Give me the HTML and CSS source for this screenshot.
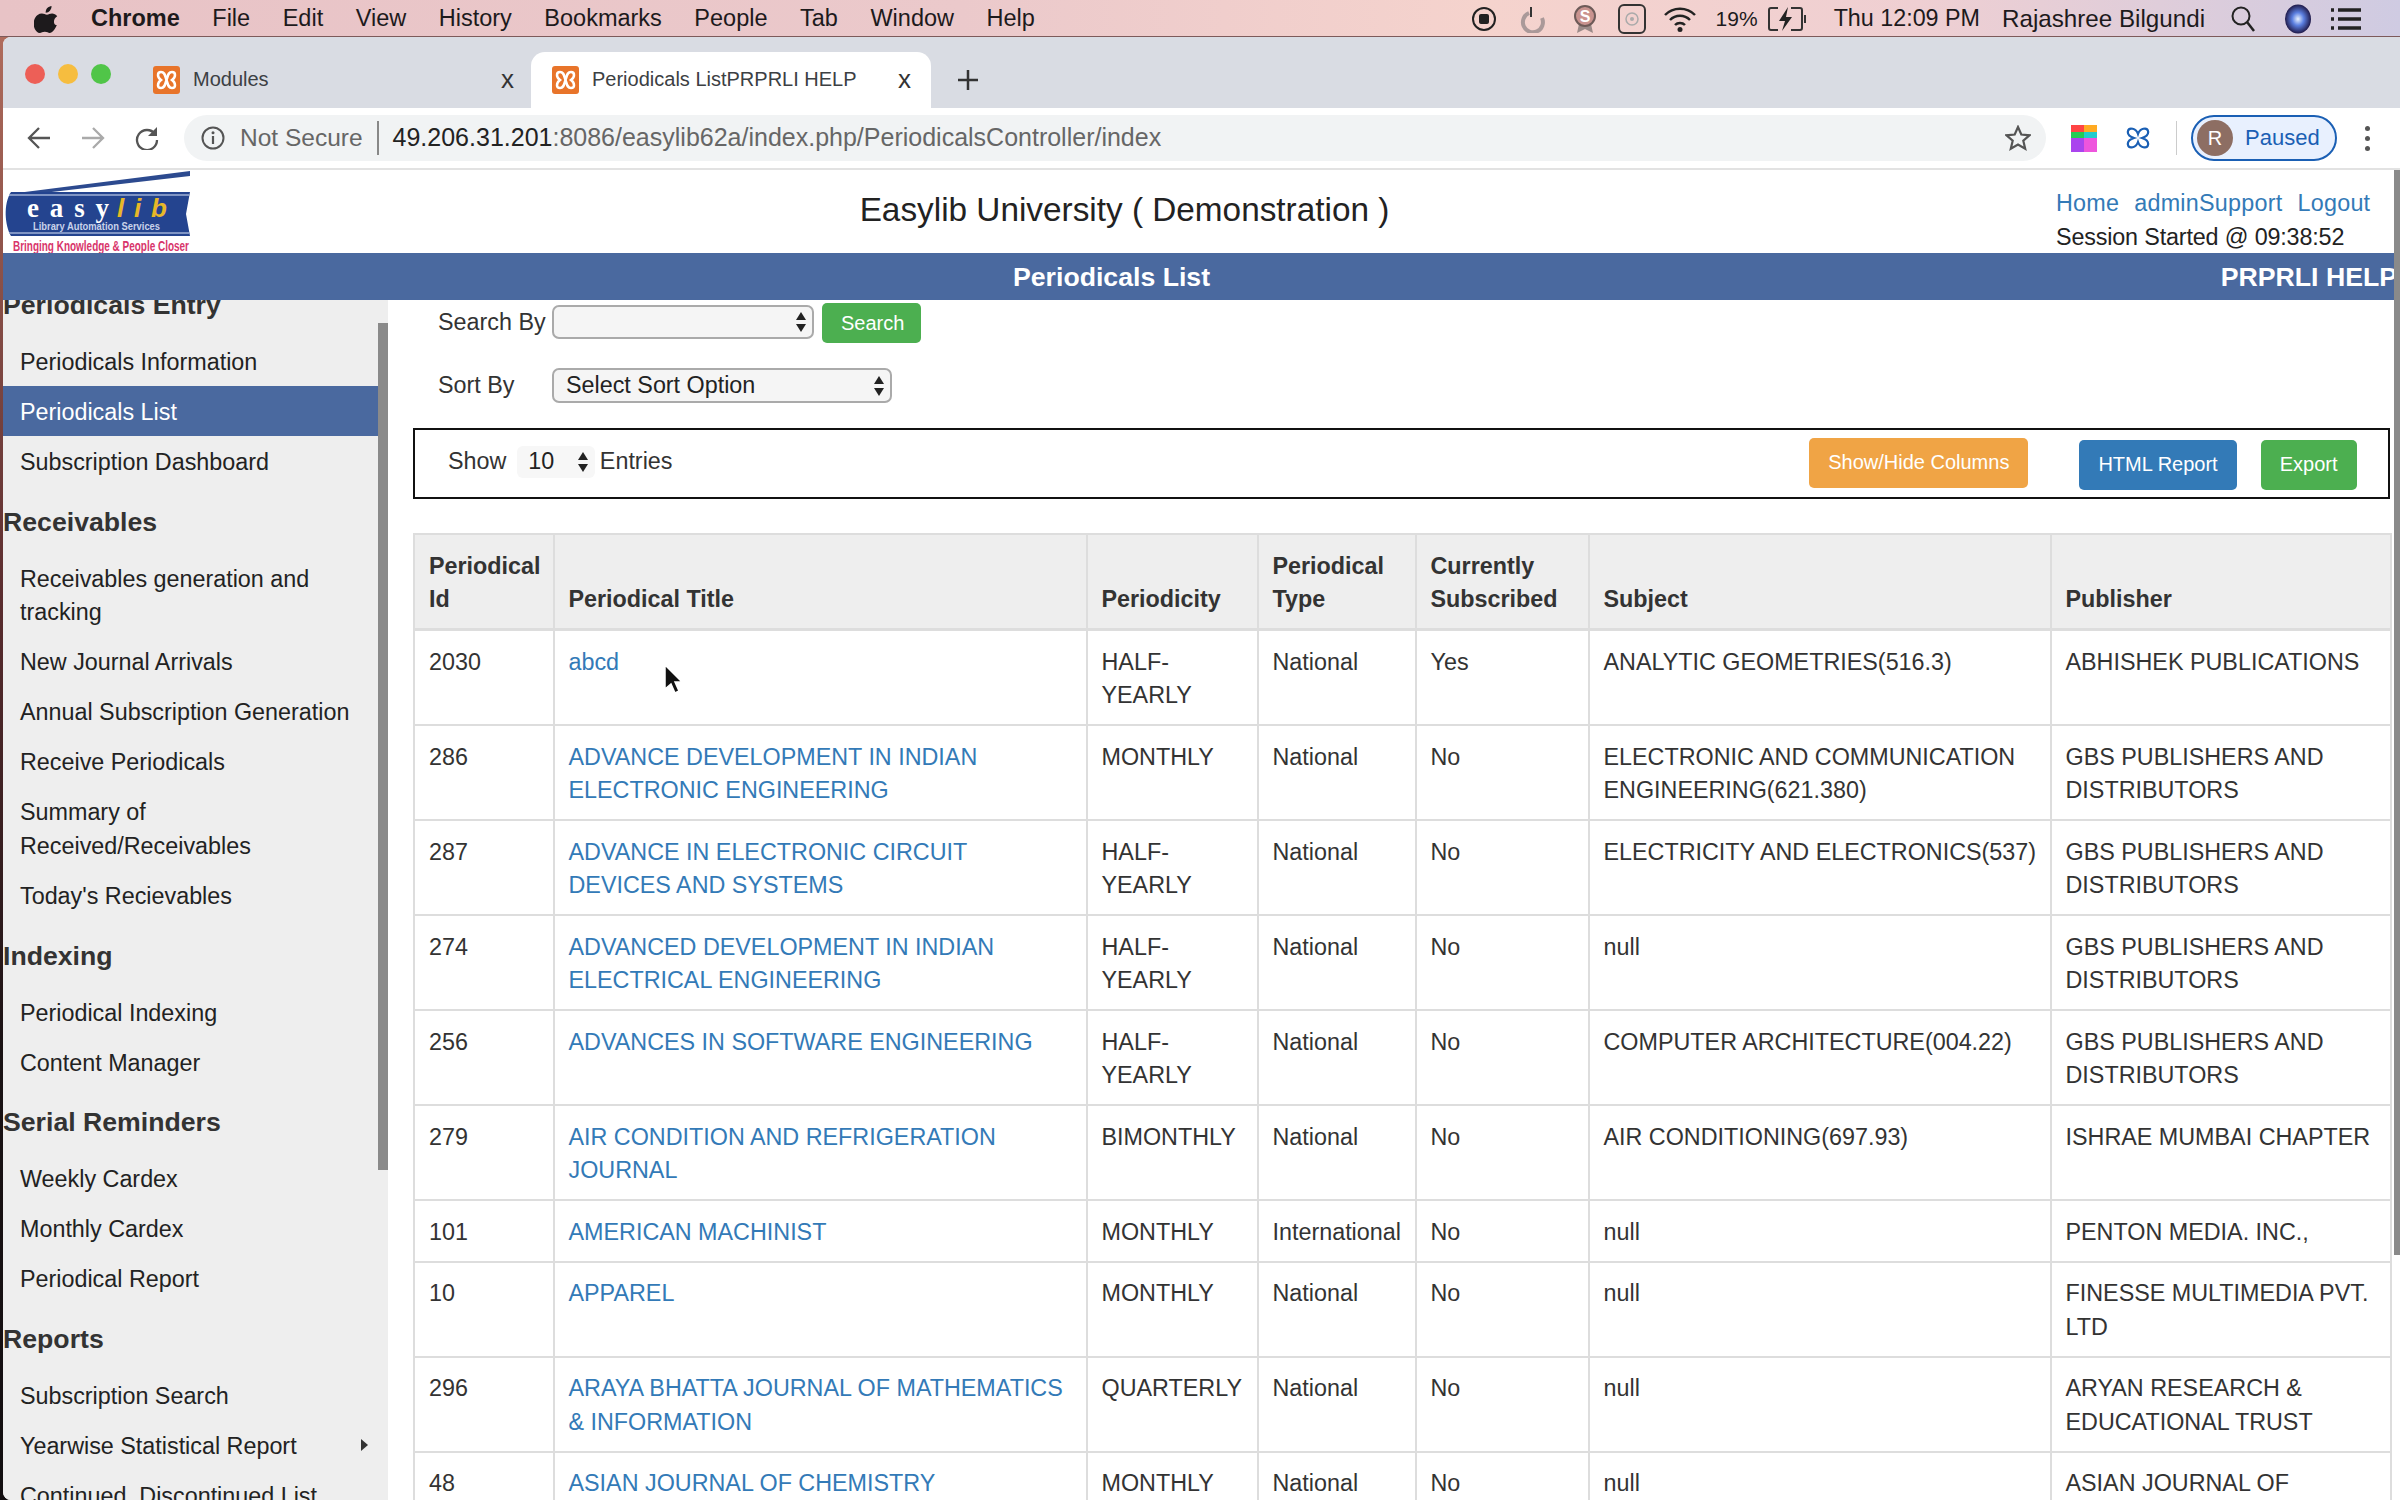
FILE: index.html
```html
<!DOCTYPE html>
<html lang="en">
<head>
    <meta charset="UTF-8">
    <meta name="viewport" content="width=device-width, initial-scale=1.0">
    <title>Periodicals List</title>
    <link rel="stylesheet" href="styles.css">
</head>
<body>

    <!-- mac menu bar -->
    <div class="menubar">
        <svg class="apple" width="24" height="28" viewBox="0 0 24 28"><path d="M17.5 1c.2 2-.6 3.600-1.600 4.800-1.100 1.200-2.700 2.100-4.200 2-.2-1.800.7-3.600 1.600-4.700C14.400 1.900 16.200 1.100 17.500 1zM22.800 20c-.7 1.600-1 2.300-1.900 3.700-1.300 1.900-3 4.200-5.100 4.200-1.900 0-2.400-1.200-5-1.200s-3.200 1.200-5 1.200c-2.200 0-3.800-2.100-5-4C-1.500 19.500-.2 12.600 3.600 10c1.400-.9 2.900-1.400 4.300-1.400 2.100 0 3.400 1.200 5.100 1.200 1.700 0 2.700-1.200 5.100-1.200 1.800 0 3.800 1 5.100 2.700-4.500 2.500-3.800 8.900-1 8.700z" fill="#1d1a1c"/></svg>
        <span class="menu-app">Chrome</span>
        <span class="menu-item">File</span>
        <span class="menu-item">Edit</span>
        <span class="menu-item">View</span>
        <span class="menu-item">History</span>
        <span class="menu-item">Bookmarks</span>
        <span class="menu-item">People</span>
        <span class="menu-item">Tab</span>
        <span class="menu-item">Window</span>
        <span class="menu-item">Help</span>

        <div class="menu-status">
            <svg width="26" height="26" viewBox="0 0 26 26"><circle cx="13" cy="13" r="11" fill="none" stroke="#222" stroke-width="2"/><rect x="8" y="8" width="10" height="10" rx="2" fill="#222"/></svg>
            <svg class="st-arc" width="28" height="28" viewBox="0 0 28 28"><path d="M10 8a10 10 0 1 0 13 5" fill="none" stroke="#a99" stroke-width="4"/><path d="M12 2v10" stroke="#333" stroke-width="2"/></svg>
            <svg class="st-badge" width="26" height="30" viewBox="0 0 26 30"><path d="M7 20l-2 9 8-4 8 4-2-9z" fill="#9a8a88"/><circle cx="13" cy="12" r="10" fill="#c9938f" stroke="#6d5a58" stroke-width="2"/><text x="13" y="18" class="badge-letter">S</text></svg>
            <svg class="st-box" width="28" height="30" viewBox="0 0 28 30"><rect x="1" y="1" width="26" height="28" rx="5" fill="none" stroke="#333" stroke-width="2"/><circle cx="14" cy="15" r="6" fill="none" stroke="#aaa" stroke-width="1.500"/><circle cx="14" cy="15" r="2" fill="#aaa"/></svg>
            <svg class="st-wifi" width="34" height="26" viewBox="0 0 34 26"><path d="M2 9a21 21 0 0 1 30 0M7 14a14 14 0 0 1 20 0M12 19a7 7 0 0 1 10 0" fill="none" stroke="#222" stroke-width="2.500"/><circle cx="17" cy="23.500" r="2.500" fill="#222"/></svg>
            <span class="status-percent">19%</span>
            <svg class="battery" width="40" height="26" viewBox="0 0 40 26"><path d="M11 2H4a2 2 0 0 0-2 2v18a2 2 0 0 0 2 2h7M24 2h9a2 2 0 0 1 2 2v18a2 2 0 0 1-2 2h-9" fill="none" stroke="#333" stroke-width="2"/><path d="M37 9h2v8h-2z" fill="#333"/><path d="M21 1L12 15h6l-3 10 10-14h-6z" fill="#222"/></svg>
            <span class="status-time">Thu 12:09 PM</span>
            <span class="status-user">Rajashree Bilgundi</span>
            <svg class="status-search" width="26" height="28" viewBox="0 0 26 28"><circle cx="11" cy="11" r="8.500" fill="none" stroke="#222" stroke-width="2"/><path d="M17 17l7 9" stroke="#222" stroke-width="2.500"/></svg>
            <svg class="siri" width="28" height="30" viewBox="0 0 28 30"><defs><radialGradient id="siriFill"><stop offset="0" stop-color="#e9f2ff"/><stop offset=".45" stop-color="#5b7fe0"/><stop offset="1" stop-color="#201a4a"/></radialGradient></defs><ellipse cx="14" cy="15" rx="13" ry="14.500" fill="url(#siriFill)"/></svg>
            <svg class="status-list" width="32" height="24" viewBox="0 0 32 24"><path d="M8 3h23M8 12h23M8 21h23" stroke="#222" stroke-width="3.500"/><path d="M1 3h3M1 12h3M1 21h3" stroke="#222" stroke-width="3.500"/></svg>
        </div>
    </div>

    <div class="window">

        <!-- tabs -->
        <div class="tabstrip">
            <div class="traffic">
                <span class="light light-red"></span>
                <span class="light light-yellow"></span>
                <span class="light light-green"></span>
            </div>
            <div class="tab">
                <svg class="favicon" width="27" height="28" viewBox="0 0 27 28"><rect width="27" height="28" rx="3" fill="#e8742a"/><path d="M8 6c-4 0-4 5 0 8-4 3-4 8 0 8s4-4 5.500-8C15 10 15 6 19 6s4 5 0 8c4 3 4 8 0 8s-4-4-5.500-8C12 10 12 6 8 6z" fill="none" stroke="#fff" stroke-width="2.500"/></svg>
                <span class="tab-title">Modules</span>
                <span class="tab-close">x</span>
            </div>
            <div class="tab tab-active">
                <svg class="favicon" width="27" height="28" viewBox="0 0 27 28"><rect width="27" height="28" rx="3" fill="#e8742a"/><path d="M8 6c-4 0-4 5 0 8-4 3-4 8 0 8s4-4 5.500-8C15 10 15 6 19 6s4 5 0 8c4 3 4 8 0 8s-4-4-5.500-8C12 10 12 6 8 6z" fill="none" stroke="#fff" stroke-width="2.500"/></svg>
                <span class="tab-title">Periodicals ListPRPRLI HELP</span>
                <span class="tab-close">x</span>
            </div>
            <svg class="new-tab" width="22" height="22" viewBox="0 0 22 22"><path d="M11 1v20M1 11h20" stroke="#333" stroke-width="2.500"/></svg>
        </div>

        <!-- address bar -->
        <div class="toolbar">
            <svg class="nav-icon" width="24" height="24" viewBox="0 0 24 24"><path d="M23 12H3M12 2L2 12l10 10" fill="none" stroke="#555" stroke-width="2.300"/></svg>
            <svg class="nav-icon" width="24" height="24" viewBox="0 0 24 24"><path d="M1 12h20M12 2l10 10-10 10" fill="none" stroke="#aaa" stroke-width="2.300"/></svg>
            <svg class="nav-icon" width="24" height="24" viewBox="0 0 24 24"><path d="M20 8a10 10 0 1 0 2 6" fill="none" stroke="#555" stroke-width="2.300"/><path d="M22 1v9h-9z" fill="#555"/></svg>
            <div class="omnibox">
                <svg class="info-icon" width="24" height="24" viewBox="0 0 24 24"><circle cx="12" cy="12" r="10.500" fill="none" stroke="#555" stroke-width="2"/><path d="M12 10v8" stroke="#555" stroke-width="2.200"/><circle cx="12" cy="6.800" r="1.500" fill="#555"/></svg>
                <span class="not-secure">Not Secure</span>
                <span class="url"><span class="url-host">49.206.31.201</span>:8086/easylib62a/index.php/PeriodicalsController/index</span>
                <svg class="star-icon" width="26" height="26" viewBox="0 0 26 26"><path d="M13 2l3.300 7.500 8.200.8-6.200 5.400 1.900 8L13 19.500l-7.200 4.200 1.900-8L1.500 10.300l8.200-.8z" fill="none" stroke="#555" stroke-width="2.200"/></svg>
            </div>
            <div class="colour-ext">
                <span></span><span></span><span></span><span></span>
            </div>
            <svg class="flower-ext" width="24" height="26" viewBox="0 0 24 26"><path d="M12 9c-2-6-9-7-10-3s3 6 6 7c-3 1-7 3-6 7s8 3 10-3c2 6 9 7 10 3s-3-6-6-7c3-1 7-3 6-7s-8-3-10 3z" fill="none" stroke="#1a5fb4" stroke-width="2.200"/></svg>
            <span class="toolbar-divider"></span>
            <div class="paused">
                <span class="avatar">R</span>
                <span class="paused-label">Paused</span>
            </div>
            <div class="kebab"><span></span><span></span><span></span></div>
        </div>

        <!-- site header -->
        <div class="site-header">
            <svg class="logo" width="187" height="83" viewBox="0 0 187 83">
                <path d="M6 24L187 1v5L14 26z" fill="#2c4a8f"/>
                <path d="M8 22h179l-4 22 4 22H8C2 56 0 34 8 22z" fill="#24448f"/>
                <path d="M6 25h180M6 63h180" stroke="#9fb0d6" stroke-width="1.500"/>
                <text x="24" y="47" class="logo-easy" textLength="82" lengthAdjust="spacing">easy</text>
                <text x="114" y="47" class="logo-lib" textLength="50" lengthAdjust="spacing">lib</text>
                <text x="30" y="60" class="logo-sub" textLength="127" lengthAdjust="spacingAndGlyphs">Library Automation Services</text>
                <text x="10" y="81" class="logo-tag" textLength="176" lengthAdjust="spacingAndGlyphs">Bringing Knowledge &amp; People Closer</text>
            </svg>
            <div class="site-title">Easylib University ( Demonstration )</div>
            <div class="site-user">
                <div class="site-links">
                    <a href="#">Home</a>
                    <a href="#">adminSupport</a>
                    <a href="#">Logout</a>
                </div>
                <div class="site-session">Session Started @ 09:38:52</div>
            </div>
        </div>

        <div class="title-bar">
            <span class="title-main">Periodicals List</span>
            <span class="title-side">PRPRLI HELP</span>
        </div>

        <div class="layout">

            <!-- left menu -->
            <div class="sidebar">
                <div class="sidebar-inner">
                    <h4>Periodicals Entry</h4>
                    <a class="side-link" href="#">Periodicals Information</a>
                    <a class="side-link active" href="#">Periodicals List</a>
                    <a class="side-link" href="#">Subscription Dashboard</a>
                    <h4>Receivables</h4>
                    <a class="side-link" href="#">Receivables generation and tracking</a>
                    <a class="side-link" href="#">New Journal Arrivals</a>
                    <a class="side-link" href="#">Annual Subscription Generation</a>
                    <a class="side-link" href="#">Receive Periodicals</a>
                    <a class="side-link" href="#">Summary of Received/Receivables</a>
                    <a class="side-link" href="#">Today's Recievables</a>
                    <h4>Indexing</h4>
                    <a class="side-link" href="#">Periodical Indexing</a>
                    <a class="side-link" href="#">Content Manager</a>
                    <h4>Serial Reminders</h4>
                    <a class="side-link" href="#">Weekly Cardex</a>
                    <a class="side-link" href="#">Monthly Cardex</a>
                    <a class="side-link" href="#">Periodical Report</a>
                    <h4>Reports</h4>
                    <a class="side-link" href="#">Subscription Search</a>
                    <a class="side-link has-sub" href="#">Yearwise Statistical Report</a>
                    <a class="side-link" href="#">Continued_Discontinued List</a>
                </div>
                <div class="side-thumb"></div>
            </div>

            <!-- periodicals -->
            <div class="main">
                <div class="filter-row filter-search">
                    <label class="filter-label">Search By</label>
                    <div class="fake-select search-select">
                        <span></span>
                        <svg width="12" height="22" viewBox="0 0 12 22"><path d="M6 1l5 8H1zM6 21l5-8H1z" fill="#222"/></svg>
                    </div>
                    <button class="btn btn-green btn-search">Search</button>
                </div>
                <div class="filter-row filter-sort">
                    <label class="filter-label">Sort By</label>
                    <div class="fake-select sort-select">
                        <span>Select Sort Option</span>
                        <svg width="12" height="22" viewBox="0 0 12 22"><path d="M6 1l5 8H1zM6 21l5-8H1z" fill="#222"/></svg>
                    </div>
                </div>

                <div class="entries-box">
                    <span class="entries-show">Show</span>
                    <div class="entries-select">
                        <span>10</span>
                        <svg width="12" height="22" viewBox="0 0 12 22"><path d="M6 1l5 8H1zM6 21l5-8H1z" fill="#222"/></svg>
                    </div>
                    <span class="entries-label">Entries</span>
                    <button class="btn btn-orange">Show/Hide Columns</button>
                    <button class="btn btn-blue">HTML Report</button>
                    <button class="btn btn-green">Export</button>
                </div>

                <table class="grid">
                    <colgroup>
                        <col class="col-id">
                        <col class="col-title">
                        <col class="col-period">
                        <col class="col-type">
                        <col class="col-current">
                        <col class="col-subject">
                        <col class="col-publisher">
                    </colgroup>
                    <thead>
                        <tr>
                            <th>Periodical Id</th>
                            <th>Periodical Title</th>
                            <th>Periodicity</th>
                            <th>Periodical Type</th>
                            <th>Currently Subscribed</th>
                            <th>Subject</th>
                            <th>Publisher</th>
                        </tr>
                    </thead>
                    <tbody>
                        <tr>
                            <td>2030</td>
                            <td><a href="#">abcd</a></td>
                            <td>HALF-YEARLY</td>
                            <td>National</td>
                            <td>Yes</td>
                            <td>ANALYTIC GEOMETRIES(516.3)</td>
                            <td>ABHISHEK PUBLICATIONS</td>
                        </tr>
                        <tr>
                            <td>286</td>
                            <td><a href="#">ADVANCE DEVELOPMENT IN INDIAN ELECTRONIC ENGINEERING</a></td>
                            <td>MONTHLY</td>
                            <td>National</td>
                            <td>No</td>
                            <td>ELECTRONIC AND COMMUNICATION ENGINEERING(621.380)</td>
                            <td>GBS PUBLISHERS AND DISTRIBUTORS</td>
                        </tr>
                        <tr>
                            <td>287</td>
                            <td><a href="#">ADVANCE IN ELECTRONIC CIRCUIT DEVICES AND SYSTEMS</a></td>
                            <td>HALF-YEARLY</td>
                            <td>National</td>
                            <td>No</td>
                            <td>ELECTRICITY AND ELECTRONICS(537)</td>
                            <td>GBS PUBLISHERS AND DISTRIBUTORS</td>
                        </tr>
                        <tr>
                            <td>274</td>
                            <td><a href="#">ADVANCED DEVELOPMENT IN INDIAN ELECTRICAL ENGINEERING</a></td>
                            <td>HALF-YEARLY</td>
                            <td>National</td>
                            <td>No</td>
                            <td>null</td>
                            <td>GBS PUBLISHERS AND DISTRIBUTORS</td>
                        </tr>
                        <tr>
                            <td>256</td>
                            <td><a href="#">ADVANCES IN SOFTWARE ENGINEERING</a></td>
                            <td>HALF-YEARLY</td>
                            <td>National</td>
                            <td>No</td>
                            <td>COMPUTER ARCHITECTURE(004.22)</td>
                            <td>GBS PUBLISHERS AND DISTRIBUTORS</td>
                        </tr>
                        <tr>
                            <td>279</td>
                            <td><a href="#">AIR CONDITION AND REFRIGERATION JOURNAL</a></td>
                            <td>BIMONTHLY</td>
                            <td>National</td>
                            <td>No</td>
                            <td>AIR CONDITIONING(697.93)</td>
                            <td>ISHRAE MUMBAI CHAPTER</td>
                        </tr>
                        <tr>
                            <td>101</td>
                            <td><a href="#">AMERICAN MACHINIST</a></td>
                            <td>MONTHLY</td>
                            <td>International</td>
                            <td>No</td>
                            <td>null</td>
                            <td>PENTON MEDIA. INC.,</td>
                        </tr>
                        <tr>
                            <td>10</td>
                            <td><a href="#">APPAREL</a></td>
                            <td>MONTHLY</td>
                            <td>National</td>
                            <td>No</td>
                            <td>null</td>
                            <td>FINESSE MULTIMEDIA PVT. LTD</td>
                        </tr>
                        <tr>
                            <td>296</td>
                            <td><a href="#">ARAYA BHATTA JOURNAL OF MATHEMATICS &amp; INFORMATION</a></td>
                            <td>QUARTERLY</td>
                            <td>National</td>
                            <td>No</td>
                            <td>null</td>
                            <td>ARYAN RESEARCH &amp; EDUCATIONAL TRUST</td>
                        </tr>
                        <tr>
                            <td>48</td>
                            <td><a href="#">ASIAN JOURNAL OF CHEMISTRY</a></td>
                            <td>MONTHLY</td>
                            <td>National</td>
                            <td>No</td>
                            <td>null</td>
                            <td>ASIAN JOURNAL OF CHEMISTRY</td>
                        </tr>
                    </tbody>
                </table>

                <svg class="cursor" width="20" height="32" viewBox="0 0 20 32"><path d="M2 2v24l6-5 4 9 4-2-4-9h7z" fill="#111" stroke="#fff" stroke-width="1.500"/></svg>
            </div>

            <div class="page-thumb"></div>
        </div>
    </div>

</body>
</html>
```

FILE: styles.css
```css
* {
    box-sizing: border-box;
}
html, body {
    margin: 0;
    height: 1500px;
    overflow: hidden;
}
body {
    font-family: "Liberation Sans", Arial, sans-serif;
    font-size: 23.33px;
    line-height: 33.33px;
    color: #333;
    background: linear-gradient(180deg, #b5705f 0%, #5a2c2e 40%, #1a1214 70%, #120e10 100%);
}
a {
    color: #337ab7;
    text-decoration: none;
}

/* Menu bar */
.menubar {
    display: flex;
    align-items: center;
    height: 37px;
    padding: 2px 0 0 34px;
    font-size: 23.5px;
    color: #1d1a1c;
    background: linear-gradient(90deg, #e8c3c6 0%, #ebc9cb 40%, #f5d3cd 62%, #efcfd2 80%, #cfcbe2 100%);
    border-bottom: 1px solid #7d5a5a;
}
.menu-app {
    margin-left: 33px;
    font-weight: bold;
}
.menu-item {
    margin-left: 32.5px;
}
.menu-status {
    display: flex;
    align-items: center;
    margin-left: auto;
    padding-right: 38px;
}
.badge-letter {
    font: bold 16px "Liberation Sans", sans-serif;
    fill: #fff;
    text-anchor: middle;
}
.st-arc {
    margin-left: 22px;
}
.st-badge {
    margin-left: 25px;
}
.st-box {
    margin-left: 20px;
}
.st-wifi {
    margin-left: 17px;
}
.status-percent {
    margin-left: 19px;
    font-size: 21px;
}
.battery {
    margin-left: 9px;
}
.status-time {
    margin-left: 27px;
    font-size: 23.3px;
}
.status-user {
    margin-left: 22px;
    font-size: 24.2px;
}
.status-search {
    margin-left: 25px;
}
.siri {
    margin-left: 28px;
}
.status-list {
    margin-left: 18px;
}

/* Window */
.window {
    margin-left: 3px;
    height: 1463px;
    background: #fff;
    border-radius: 8px 0 0 8px;
    overflow: hidden;
}
.tabstrip {
    display: flex;
    height: 71px;
    padding-left: 22px;
    background: #d9dce3;
}
.traffic {
    display: flex;
    gap: 13px;
    padding-top: 27px;
    width: 128px;
}
.light {
    width: 20px;
    height: 20px;
    border-radius: 50%;
}
.light-red {
    background: #ed5f57;
}
.light-yellow {
    background: #f6bd3f;
}
.light-green {
    background: #50c548;
}
.tab {
    display: flex;
    align-items: center;
    width: 378px;
    height: 56px;
    margin-top: 15px;
    font-size: 20px;
}
.tab-active {
    width: 400px;
    padding-left: 21px;
    background: #fff;
    border-radius: 14px 14px 0 0;
}
.tab-title {
    margin-left: 13px;
    flex: 1;
    color: #3c4043;
}
.tab-close {
    margin-right: 17px;
    font-size: 26px;
    color: #333;
}
.tab-active .tab-close {
    margin-right: 20px;
}
.new-tab {
    margin: 32px 0 0 26px;
}

/* Toolbar */
.toolbar {
    display: flex;
    align-items: center;
    height: 62px;
    padding-left: 24px;
    border-bottom: 2px solid #e2e2e2;
}
.nav-icon {
    margin-right: 30px;
    flex-shrink: 0;
}
.omnibox {
    display: flex;
    align-items: center;
    width: 1862px;
    height: 46px;
    margin-left: -5px;
    padding-left: 17px;
    font-size: 24.5px;
    color: #666;
    background: #f1f3f4;
    border-radius: 23px;
}
.not-secure {
    margin-left: 15px;
    padding-right: 14px;
    border-right: 2px solid #888;
    line-height: 34px;
}
.url {
    margin-left: 14px;
    font-size: 25px;
}
.url-host {
    color: #222;
}
.star-icon {
    margin-left: auto;
    margin-right: 15px;
}
.colour-ext {
    display: grid;
    grid-template-columns: repeat(2, 13px);
    margin-left: 25px;
    height: 27px;
}
.colour-ext span:nth-child(1) {
    background: linear-gradient(#f44 0 50%, #2c5 50%);
}
.colour-ext span:nth-child(2) {
    background: linear-gradient(#fa2 0 50%, #2cc 50%);
}
.colour-ext span:nth-child(3) {
    background: #a4e;
}
.colour-ext span:nth-child(4) {
    background: #e5d;
}
.flower-ext {
    margin-left: 29px;
}
.toolbar-divider {
    width: 1px;
    height: 34px;
    margin-left: 26px;
    background: #ccc;
}
.paused {
    display: flex;
    align-items: center;
    width: 146px;
    height: 46px;
    margin-left: 14px;
    padding-left: 4px;
    background: #e8f0fe;
    border: 2px solid #1a5fb4;
    border-radius: 23px;
}
.avatar {
    width: 36px;
    height: 36px;
    font-size: 20px;
    line-height: 36px;
    text-align: center;
    color: #fff;
    background: #8d6e63;
    border-radius: 50%;
}
.paused-label {
    margin-left: 12px;
    font-size: 22px;
    color: #1a5fb4;
}
.kebab {
    display: flex;
    flex-direction: column;
    gap: 5px;
    margin-left: 28px;
}
.kebab span {
    width: 5px;
    height: 5px;
    border-radius: 50%;
    background: #555;
}

/* Site header */
.site-header {
    display: flex;
    height: 83px;
}
.logo {
    flex-shrink: 0;
}
.logo-easy {
    font: bold 27px "Liberation Serif", serif;
    fill: #fff;
}
.logo-lib {
    font: italic bold 26px "Liberation Sans", sans-serif;
    fill: #e8b828;
}
.logo-sub {
    font: bold 10.500px "Liberation Sans", sans-serif;
    fill: #c9d3ea;
}
.logo-tag {
    font: bold 14px "Liberation Sans", sans-serif;
    fill: #d8356b;
}
.site-title {
    flex: 1;
    padding: 21px 0 0 3px;
    font-size: 33.33px;
    line-height: 38px;
    text-align: center;
    color: #222;
}
.site-user {
    width: 344px;
    padding-top: 17px;
    color: #222;
}
.site-links {
    display: flex;
    gap: 15px;
    letter-spacing: .25px;
}
.site-session {
    margin-top: 1px;
    letter-spacing: -.15px;
}
.title-bar {
    display: flex;
    justify-content: space-between;
    height: 47px;
    padding-right: 3px;
    font-size: 26.67px;
    font-weight: bold;
    line-height: 49px;
    color: #fff;
    background: #4a699f;
}
.title-main {
    margin-left: 1010px;
}

/* Layout */
.layout {
    position: relative;
    display: flex;
    height: 1200px;
}
.sidebar {
    position: relative;
    flex: 0 0 385px;
    padding-right: 10px;
    overflow: hidden;
    background: #eee;
}
.sidebar-inner {
    margin-top: -31px;
}
.sidebar h4 {
    margin: 0;
    padding: 19px 0 14px;
    font-size: 26.67px;
    line-height: 34px;
    color: #333;
}
.side-link {
    position: relative;
    display: block;
    padding: 10px 17px 6.660px;
    color: #222;
}
.side-link.active {
    color: #fff;
    background: #4a699f;
}
.has-sub::after {
    content: "";
    position: absolute;
    top: 19px;
    right: 10px;
    border-left: 7px solid #333;
    border-top: 6px solid transparent;
    border-bottom: 6px solid transparent;
}
.side-thumb {
    position: absolute;
    top: 23px;
    right: 0;
    width: 10px;
    height: 847px;
    background: #8a8a8a;
}
.page-thumb {
    position: absolute;
    top: -130px;
    right: 0;
    width: 6px;
    height: 1085px;
    background: #8a8a8a;
}

/* Main */
.main {
    position: relative;
    flex: 1;
    padding: 3px 10px 0 25px;
    overflow: hidden;
}
.filter-row {
    display: flex;
    align-items: center;
}
.filter-search {
    height: 40px;
}
.filter-sort {
    height: 35px;
    margin-top: 25px;
}
.filter-label {
    width: 139px;
    padding-left: 25px;
    white-space: nowrap;
}
.fake-select {
    display: flex;
    align-items: center;
    justify-content: space-between;
    padding: 0 5px 0 12px;
    color: #222;
    background: #f5f5f5;
    border: 2px solid #aaa;
    border-radius: 7px;
}
.search-select {
    width: 262px;
    height: 34px;
    margin-top: -3px;
}
.sort-select {
    width: 340px;
    height: 35px;
}
.btn-search {
    margin-left: 8px;
    width: 99px;
    height: 40px;
}
.btn {
    padding: 0 18px;
    font-family: inherit;
    font-size: 20px;
    color: #fff;
    border: 1px solid transparent;
    border-radius: 5px;
}
.btn-green {
    background: #4caf50;
}
.btn-blue {
    background: #337ab7;
}
.btn-orange {
    background: #f0a445;
}
.entries-box {
    display: flex;
    align-items: center;
    height: 71px;
    margin-top: 25px;
    padding: 0 31.500px 0 33px;
    border: 2px solid #111;
}
.entries-box .btn {
    height: 50px;
    margin-top: 2px;
}
.entries-box .btn-orange {
    margin-top: -2px;
    margin-left: auto;
    margin-right: 51px;
}
.entries-box .btn-blue {
    margin-right: 24px;
}
.entries-show {
    margin-top: -4px;
}
.entries-label {
    margin-top: -4px;
    margin-left: 5px;
}
.entries-select {
    display: flex;
    align-items: center;
    justify-content: space-between;
    width: 77.500px;
    height: 32px;
    margin: -4px 0 0 11px;
    padding: 0 6px 0 11px;
    color: #222;
    background: #f7f7f7;
    border-radius: 6px;
}

/* Table */
.grid {
    width: 1977px;
    margin-top: 34px;
    table-layout: fixed;
    border-collapse: collapse;
}
.col-id { width: 139.500px; }
.col-title { width: 533px; }
.col-period { width: 171px; }
.col-type { width: 158px; }
.col-current { width: 173px; }
.col-subject { width: 462px; }
.col-publisher { width: 340.500px; }
.grid th, .grid td {
    padding: 14.800px 12px 11.540px 14px;
    text-align: left;
    vertical-align: top;
    border: 2px solid #ddd;
}
.grid th {
    vertical-align: bottom;
    background: #eee;
    border-bottom-width: 3px;
}
.cursor {
    position: absolute;
    top: 363px;
    left: 275px;
}
```
